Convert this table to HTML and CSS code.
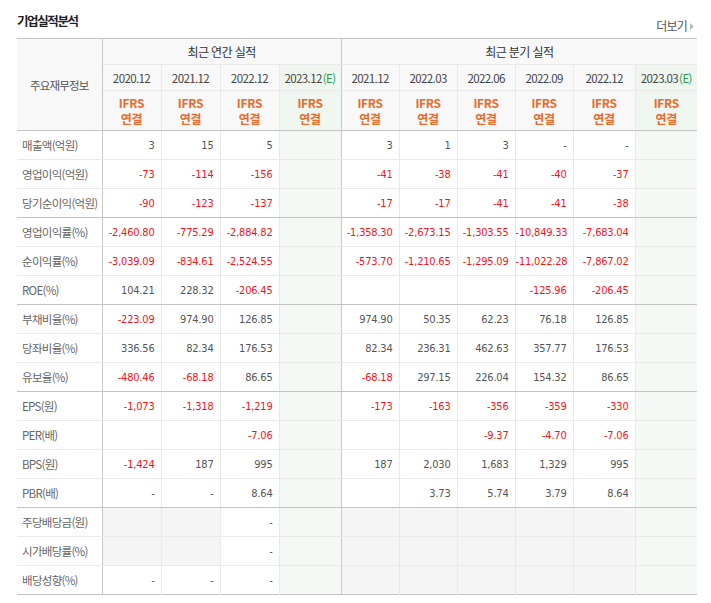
FILE: index.html
```html
<!DOCTYPE html>
<html lang="ko">
<head>
<meta charset="utf-8">
<title>기업실적분석</title>
<link rel="stylesheet" href="styles.css">
</head>
<body>
<div class="wrap">
  <div class="top">
    <h3 class="title">기업실적분석</h3>
    <a class="more" href="#">더보기<svg class="arr" width="5" height="7" viewBox="0 0 5 7"><path d="M0 0 L4 3.5 L0 7 Z" fill="#bbb"/></svg></a>
  </div>
  <table class="fin">
    <colgroup>
      <col class="c-label"><col class="c59"><col class="c59"><col class="c59"><col class="c62">
      <col class="c58"><col class="c58"><col class="c58"><col class="c58"><col class="c62"><col class="c62">
    </colgroup>
    <thead>
      <tr class="h1">
        <th rowspan="3" class="lab-h major">주요재무정보</th>
        <th colspan="4" class="major">최근 연간 실적</th>
        <th colspan="6">최근 분기 실적</th>
      </tr>
      <tr class="h2">
        <th>2020.12</th><th>2021.12</th><th>2022.12</th><th class="est major">2023.12<span class="e">(E)</span></th>
        <th>2021.12</th><th>2022.03</th><th>2022.06</th><th>2022.09</th><th>2022.12</th><th class="est">2023.03<span class="e">(E)</span></th>
      </tr>
      <tr class="h3">
        <th class="ifrs">IFRS<br>연결</th><th class="ifrs">IFRS<br>연결</th><th class="ifrs">IFRS<br>연결</th><th class="ifrs est major">IFRS<br>연결</th>
        <th class="ifrs">IFRS<br>연결</th><th class="ifrs">IFRS<br>연결</th><th class="ifrs">IFRS<br>연결</th><th class="ifrs">IFRS<br>연결</th><th class="ifrs">IFRS<br>연결</th><th class="ifrs est">IFRS<br>연결</th>
      </tr>
    </thead>
    <tbody>
      <tr><th class="lab">매출액(억원)</th><td>3</td><td>15</td><td>5</td><td class="est major"></td><td>3</td><td>1</td><td>3</td><td>-</td><td>-</td><td class="est"></td></tr>
      <tr><th class="lab">영업이익(억원)</th><td class="neg">-73</td><td class="neg">-114</td><td class="neg">-156</td><td class="est major"></td><td class="neg">-41</td><td class="neg">-38</td><td class="neg">-41</td><td class="neg">-40</td><td class="neg">-37</td><td class="est"></td></tr>
      <tr class="grp"><th class="lab">당기순이익(억원)</th><td class="neg">-90</td><td class="neg">-123</td><td class="neg">-137</td><td class="est major"></td><td class="neg">-17</td><td class="neg">-17</td><td class="neg">-41</td><td class="neg">-41</td><td class="neg">-38</td><td class="est"></td></tr>
      <tr><th class="lab">영업이익률(%)</th><td class="neg">-2,460.80</td><td class="neg">-775.29</td><td class="neg">-2,884.82</td><td class="est major"></td><td class="neg">-1,358.30</td><td class="neg">-2,673.15</td><td class="neg">-1,303.55</td><td class="neg">-10,849.33</td><td class="neg">-7,683.04</td><td class="est"></td></tr>
      <tr><th class="lab">순이익률(%)</th><td class="neg">-3,039.09</td><td class="neg">-834.61</td><td class="neg">-2,524.55</td><td class="est major"></td><td class="neg">-573.70</td><td class="neg">-1,210.65</td><td class="neg">-1,295.09</td><td class="neg">-11,022.28</td><td class="neg">-7,867.02</td><td class="est"></td></tr>
      <tr class="grp"><th class="lab">ROE(%)</th><td>104.21</td><td>228.32</td><td class="neg">-206.45</td><td class="est major"></td><td></td><td></td><td></td><td class="neg">-125.96</td><td class="neg">-206.45</td><td class="est"></td></tr>
      <tr><th class="lab">부채비율(%)</th><td class="neg">-223.09</td><td>974.90</td><td>126.85</td><td class="est major"></td><td>974.90</td><td>50.35</td><td>62.23</td><td>76.18</td><td>126.85</td><td class="est"></td></tr>
      <tr><th class="lab">당좌비율(%)</th><td>336.56</td><td>82.34</td><td>176.53</td><td class="est major"></td><td>82.34</td><td>236.31</td><td>462.63</td><td>357.77</td><td>176.53</td><td class="est"></td></tr>
      <tr class="grp"><th class="lab">유보율(%)</th><td class="neg">-480.46</td><td class="neg">-68.18</td><td>86.65</td><td class="est major"></td><td class="neg">-68.18</td><td>297.15</td><td>226.04</td><td>154.32</td><td>86.65</td><td class="est"></td></tr>
      <tr><th class="lab">EPS(원)</th><td class="neg">-1,073</td><td class="neg">-1,318</td><td class="neg">-1,219</td><td class="est major"></td><td class="neg">-173</td><td class="neg">-163</td><td class="neg">-356</td><td class="neg">-359</td><td class="neg">-330</td><td class="est"></td></tr>
      <tr><th class="lab">PER(배)</th><td></td><td></td><td class="neg">-7.06</td><td class="est major"></td><td></td><td></td><td class="neg">-9.37</td><td class="neg">-4.70</td><td class="neg">-7.06</td><td class="est"></td></tr>
      <tr><th class="lab">BPS(원)</th><td class="neg">-1,424</td><td>187</td><td>995</td><td class="est major"></td><td>187</td><td>2,030</td><td>1,683</td><td>1,329</td><td>995</td><td class="est"></td></tr>
      <tr class="grp"><th class="lab">PBR(배)</th><td>-</td><td>-</td><td>8.64</td><td class="est major"></td><td></td><td>3.73</td><td>5.74</td><td>3.79</td><td>8.64</td><td class="est"></td></tr>
      <tr><th class="lab">주당배당금(원)</th><td class="na"></td><td class="na"></td><td>-</td><td class="est major"></td><td class="na"></td><td class="na"></td><td class="na"></td><td class="na"></td><td class="na"></td><td class="est"></td></tr>
      <tr><th class="lab">시가배당률(%)</th><td class="na"></td><td class="na"></td><td>-</td><td class="est major"></td><td class="na"></td><td class="na"></td><td class="na"></td><td class="na"></td><td class="na"></td><td class="est"></td></tr>
      <tr class="last"><th class="lab">배당성향(%)</th><td>-</td><td>-</td><td>-</td><td class="est major"></td><td class="na"></td><td class="na"></td><td class="na"></td><td class="na"></td><td class="na"></td><td class="est"></td></tr>
    </tbody>
  </table>
</div>
</body>
</html>
```

FILE: styles.css
```css
html, body {
  margin: 0;
  padding: 0;
  background: #fff;
}

body {
  font-family: "Noto Sans CJK KR", "Noto Sans", sans-serif;
  color: #555;
}

.wrap {
  width: 680px;
  padding-left: 17px;
}

.top {
  display: flex;
  justify-content: space-between;
  align-items: flex-start;
  height: 38px;
}

.title {
  margin: 12px 0 0 0;
  font-size: 12.5px;
  line-height: 18px;
  font-weight: bold;
  color: #222;
  letter-spacing: -1.4px;
}

.more {
  margin: 18px 2px 0 0;
  display: flex;
  align-items: center;
  gap: 3px;
  font-size: 12px;
  line-height: 16px;
  color: #555;
  text-decoration: none;
  letter-spacing: -0.8px;
}

.arr {
  display: block;
}

.fin {
  width: 680px;
  table-layout: fixed;
  border-collapse: collapse;
  border-top: 1px solid #c4c4c4;
  border-bottom: 1px solid #c4c4c4;
}

.c-label { width: 85px; }
.c59 { width: 59px; }
.c62 { width: 62px; }
.c58 { width: 58px; }

.fin th,
.fin td {
  padding: 0;
  border: 1px solid #e9e9e9;
  border-top: 0;
  border-left: 0;
}

.fin tr > :last-child {
  border-right: 0;
}

.fin thead th {
  background: #f8f8f8;
  font-weight: normal;
  text-align: center;
  color: #333;
  font-size: 12px;
  letter-spacing: -0.6px;
}

.fin .h1 th { height: 25px; }
.fin .h2 th { height: 25px; color: #444; font-size: 11.5px; letter-spacing: -0.6px; }
.fin .h3 th { height: 39px; border-bottom-color: #c4c4c4; }

.fin thead .lab-h {
  border-bottom-color: #c4c4c4;
  color: #555;
  font-size: 11.5px;
  letter-spacing: -0.8px;
}

.e {
  color: #2f9a4e;
  margin-left: 1px;
}

.fin thead .ifrs {
  color: #ea6a2c;
  font-weight: bold;
  line-height: 16px;
  letter-spacing: -0.3px;
}

.fin .major {
  border-right-color: #c8c8c8;
}

.fin thead .est {
  background: #eff6ef;
}

.fin tbody .lab {
  height: 28px;
  text-align: left;
  padding-left: 5px;
  font-weight: normal;
  font-size: 11.5px;
  color: #666;
  letter-spacing: -0.7px;
  white-space: nowrap;
  border-right-color: #c8c8c8;
  background: #fff;
}

.fin tbody td {
  height: 28px;
  text-align: right;
  padding-right: 6px;
  font-family: "DejaVu Sans Condensed", "DejaVu Sans", sans-serif;
  font-size: 11px;
  letter-spacing: -0.2px;
  color: #555;
  white-space: nowrap;
}

.fin tbody td.neg {
  color: #f3141b;
}

.fin tbody td.est {
  background: #f5f9f5;
}

.fin tbody td.na {
  background: #f5f5f5;
}

.fin tr.grp th,
.fin tr.grp td {
  border-bottom-color: #c4c4c4;
}

.fin tr.last th,
.fin tr.last td {
  border-bottom: 0;
}
```
